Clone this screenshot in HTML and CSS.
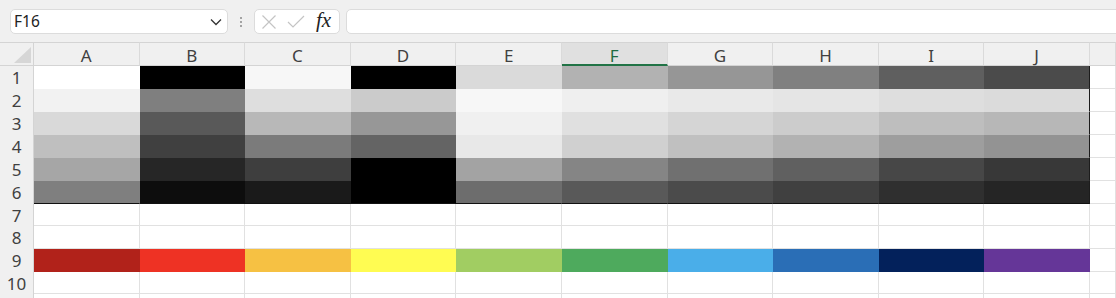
FILE: index.html
```html
<!DOCTYPE html>
<html>
<head>
<meta charset="utf-8">
<link rel="stylesheet" href="styles.css">
</head>
<body>
<div class="app">
  <div class="toolbar">
    <div class="namebox">
      <span class="name">F16</span>
      <svg class="chev" width="12" height="8" viewBox="0 0 12 8"><polyline points="1,1.5 6,6.5 11,1.5" fill="none" stroke="#333" stroke-width="1.3"/></svg>
    </div>
    <div class="grip"><i></i><i></i><i></i></div>
    <div class="fbtns">
      <svg class="ico" width="16" height="16" viewBox="0 0 16 16"><path d="M1.5 1.5 L14.5 14.5 M14.5 1.5 L1.5 14.5" stroke="#c4c4c4" stroke-width="1.2" fill="none"/></svg>
      <svg class="ico" width="18" height="16" viewBox="0 0 18 16"><polyline points="1,8 6,13 17,2" stroke="#c4c4c4" stroke-width="1.2" fill="none"/></svg>
      <span class="fx">fx</span>
    </div>
    <div class="fbar"></div>
  </div>

  <div class="sheet">
    <div class="corner"><svg width="34" height="22" viewBox="0 0 34 22"><polygon points="14,20 31,4 31,20" fill="#d6d6d6"/></svg></div>
    <div class="ch">A</div><div class="ch">B</div><div class="ch">C</div><div class="ch">D</div><div class="ch">E</div><div class="ch sel">F</div><div class="ch">G</div><div class="ch">H</div><div class="ch">I</div><div class="ch">J</div><div class="ch"></div>

    <div class="rh">1</div>
    <div class="c fill" style="--fill:#ffffff"></div><div class="c fill" style="--fill:#000000"></div><div class="c fill" style="--fill:#f7f7f7"></div><div class="c fill" style="--fill:#000000"></div><div class="c fill" style="--fill:#dadada"></div><div class="c fill" style="--fill:#b2b2b2"></div><div class="c fill" style="--fill:#969696"></div><div class="c fill" style="--fill:#808080"></div><div class="c fill" style="--fill:#5f5f5f"></div><div class="c fill last" style="--fill:#4b4b4b"></div><div class="c"></div>

    <div class="rh">2</div>
    <div class="c fill" style="--fill:#f2f2f2"></div><div class="c fill" style="--fill:#7f7f7f"></div><div class="c fill" style="--fill:#dedede"></div><div class="c fill" style="--fill:#cbcbcb"></div><div class="c fill" style="--fill:#f7f7f7"></div><div class="c fill" style="--fill:#efefef"></div><div class="c fill" style="--fill:#e9e9e9"></div><div class="c fill" style="--fill:#e5e5e5"></div><div class="c fill" style="--fill:#dedede"></div><div class="c fill last" style="--fill:#dbdbdb"></div><div class="c"></div>

    <div class="rh">3</div>
    <div class="c fill" style="--fill:#d9d9d9"></div><div class="c fill" style="--fill:#595959"></div><div class="c fill" style="--fill:#b8b8b8"></div><div class="c fill" style="--fill:#979797"></div><div class="c fill" style="--fill:#f0f0f0"></div><div class="c fill" style="--fill:#e0e0e0"></div><div class="c fill" style="--fill:#d5d5d5"></div><div class="c fill" style="--fill:#cccccc"></div><div class="c fill" style="--fill:#bebebe"></div><div class="c fill last" style="--fill:#b7b7b7"></div><div class="c"></div>

    <div class="rh">4</div>
    <div class="c fill" style="--fill:#bfbfbf"></div><div class="c fill" style="--fill:#404040"></div><div class="c fill" style="--fill:#7b7b7b"></div><div class="c fill" style="--fill:#646464"></div><div class="c fill" style="--fill:#e8e8e8"></div><div class="c fill" style="--fill:#d0d0d0"></div><div class="c fill" style="--fill:#c0c0c0"></div><div class="c fill" style="--fill:#b2b2b2"></div><div class="c fill" style="--fill:#9e9e9e"></div><div class="c fill last" style="--fill:#939393"></div><div class="c"></div>

    <div class="rh">5</div>
    <div class="c fill" style="--fill:#a6a6a6"></div><div class="c fill" style="--fill:#262626"></div><div class="c fill" style="--fill:#3e3e3e"></div><div class="c fill" style="--fill:#000000"></div><div class="c fill" style="--fill:#a3a3a3"></div><div class="c fill" style="--fill:#858585"></div><div class="c fill" style="--fill:#707070"></div><div class="c fill" style="--fill:#606060"></div><div class="c fill" style="--fill:#474747"></div><div class="c fill last" style="--fill:#383838"></div><div class="c"></div>

    <div class="rh">6</div>
    <div class="c fill bot" style="--fill:#7f7f7f"></div><div class="c fill bot" style="--fill:#0d0d0d"></div><div class="c fill bot" style="--fill:#1a1a1a"></div><div class="c fill bot" style="--fill:#000000"></div><div class="c fill bot" style="--fill:#6d6d6d"></div><div class="c fill bot" style="--fill:#595959"></div><div class="c fill bot" style="--fill:#4b4b4b"></div><div class="c fill bot" style="--fill:#404040"></div><div class="c fill bot" style="--fill:#2f2f2f"></div><div class="c fill bot last" style="--fill:#252525"></div><div class="c"></div>

    <div class="rh">7</div>
    <div class="c"></div><div class="c"></div><div class="c"></div><div class="c"></div><div class="c"></div><div class="c"></div><div class="c"></div><div class="c"></div><div class="c"></div><div class="c"></div><div class="c"></div>

    <div class="rh">8</div>
    <div class="c"></div><div class="c"></div><div class="c"></div><div class="c"></div><div class="c"></div><div class="c"></div><div class="c"></div><div class="c"></div><div class="c"></div><div class="c"></div><div class="c"></div>

    <div class="rh">9</div>
    <div class="c fill" style="--fill:#b1221a"></div><div class="c fill" style="--fill:#ee3224"></div><div class="c fill" style="--fill:#f6c143"></div><div class="c fill" style="--fill:#fffc52"></div><div class="c fill" style="--fill:#a1cd62"></div><div class="c fill" style="--fill:#4eaa5d"></div><div class="c fill" style="--fill:#4aaee9"></div><div class="c fill" style="--fill:#2a6eb6"></div><div class="c fill" style="--fill:#03215b"></div><div class="c fill" style="--fill:#653698"></div><div class="c"></div>

    <div class="rh">10</div>
    <div class="c"></div><div class="c"></div><div class="c"></div><div class="c"></div><div class="c"></div><div class="c"></div><div class="c"></div><div class="c"></div><div class="c"></div><div class="c"></div><div class="c"></div>

    <div class="rh"></div>
    <div class="c"></div><div class="c"></div><div class="c"></div><div class="c"></div><div class="c"></div><div class="c"></div><div class="c"></div><div class="c"></div><div class="c"></div><div class="c"></div><div class="c"></div>
  </div>
</div>
</body>
</html>
```

FILE: styles.css
```css
html, body {
  margin: 0;
  padding: 0;
  background: #f0f0f0;
  overflow: hidden;
}
.app {
  width: 1116px;
  height: 298px;
  overflow: hidden;
  font-family: "Noto Sans", "Open Sans", sans-serif;
}
.toolbar {
  height: 42px;
  box-sizing: border-box;
  padding: 9px 0 0 10px;
  display: flex;
  align-items: flex-start;
  background: #f0f0f0;
}
.toolbar > * { flex: none; }
.namebox {
  width: 218px;
  height: 25px;
  box-sizing: border-box;
  background: #fff;
  border: 1px solid #dcdcdc;
  border-radius: 5px;
  display: flex;
  align-items: center;
  justify-content: space-between;
  padding: 0 5px 0 3px;
}
.name {
  font-size: 15.5px;
  color: #222;
  line-height: 1;
}
.chev { display: block; }
.grip {
  width: 26px;
  height: 25px;
  display: flex;
  flex-direction: column;
  align-items: center;
  justify-content: center;
  gap: 2px;
}
.grip i {
  display: block;
  width: 2px;
  height: 2px;
  border-radius: 1px;
  background: #8a8a8a;
}
.fbtns {
  width: 86px;
  height: 25px;
  box-sizing: border-box;
  background: #fff;
  border: 1px solid #dcdcdc;
  border-radius: 5px;
  display: flex;
  align-items: center;
  padding: 0 0 0 6px;
  gap: 10px;
}
.ico { display: block; }
.fx {
  font-family: "Liberation Serif", "DejaVu Serif", serif;
  font-style: italic;
  font-size: 21px;
  color: #222;
  line-height: 1;
  margin-left: 1px;
  margin-top: -2px;
}
.fbar {
  margin-left: 6px;
  width: 800px;
  height: 25px;
  box-sizing: border-box;
  background: #fff;
  border: 1px solid #dcdcdc;
  border-radius: 5px;
}
.sheet {
  display: grid;
  grid-template-columns: 34px repeat(10, 105.6px) 1fr;
  grid-template-rows: 24px 23px 23px 23px 23px 23px 23px 22px 23px 23px 22px 23px;
  background: #fff;
}
.corner {
  background: #f0f0f0;
  border-top: 1px solid #d4d4d4;
  border-bottom: 1px solid #d4d4d4;
  border-right: 1px solid #d4d4d4;
  box-sizing: border-box;
}
.corner svg { display: block; }
.ch {
  background: #f0f0f0;
  box-sizing: border-box;
  border-top: 1px solid #d4d4d4;
  border-bottom: 1px solid #d4d4d4;
  border-right: 1px solid #dadada;
  display: flex;
  align-items: center;
  justify-content: center;
  font-size: 17px;
  color: #404040;
  line-height: 1;
  padding-top: 2px;
}
.ch.sel {
  background: #e0e0e0;
  color: #1e6b41;
  border-bottom: 2px solid #217346;
  padding-top: 3px;
}
.rh {
  background: #f0f0f0;
  box-sizing: border-box;
  border-right: 1px solid #d4d4d4;
  display: flex;
  align-items: center;
  justify-content: center;
  font-size: 17px;
  color: #404040;
  line-height: 1;
}
.c {
  box-sizing: border-box;
  border-right: 1px solid #e1e1e1;
  border-bottom: 1px solid #e1e1e1;
}
.c.fill {
  background: var(--fill);
  border-color: transparent;
}
.c.fill.last {
  border-right-color: #1c1c1c;
}
.c.fill.bot {
  border-bottom-color: #111;
}
```
